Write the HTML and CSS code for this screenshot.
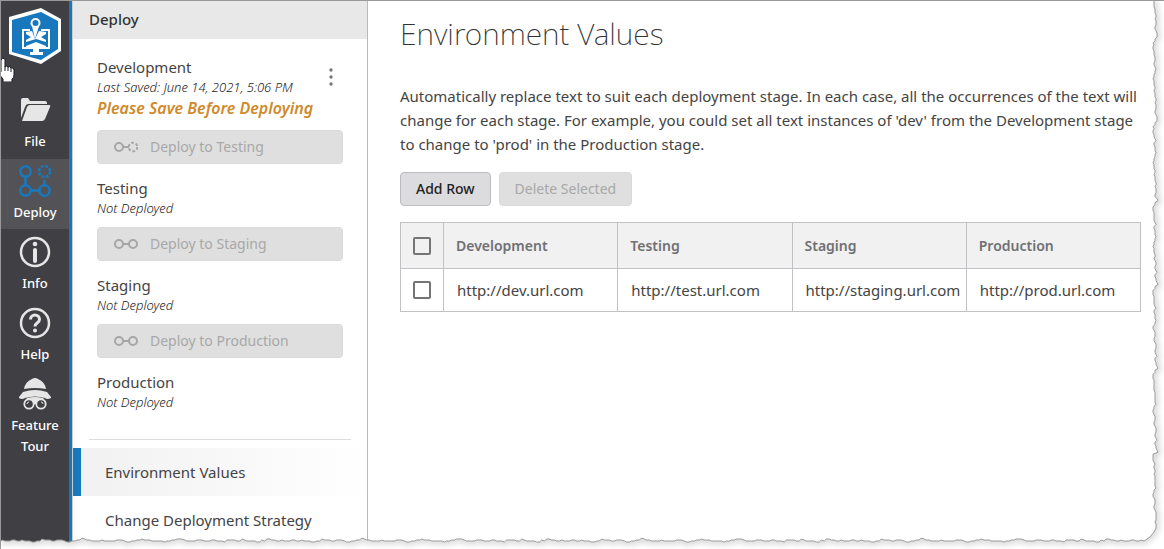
FILE: index.html
```html
<!DOCTYPE html>
<html lang="en">
<head>
<meta charset="utf-8">
<title>Environment Values</title>
<link rel="stylesheet" href="styles.css">
</head>
<body>
<div class="app">
  <nav class="rail">
    <a class="logo" href="#" aria-label="Home">
      <svg width="54" height="58" viewBox="0 0 54 58">
        <path d="M33 0 53 11V43L33 56 1 46V9Z" fill="#fff"/>
        <path d="M33 4 50 13V41L33 52 4 44V12Z" fill="#1878be"/>
        <path d="M22 22H15V40H41V22H33" fill="none" stroke="#fff" stroke-width="2"/>
        <path d="M18 24l6-1 3 8 4-8 7 1v2l-5 3 5 3v2l-10-3-10 3v-2l5-3-5-3Z" fill="#fff"/>
        <path d="M18 38l10-4 10 4v1H18ZM25 41h6v3h4v3H22v-3h3Z" fill="#fff"/>
        <path d="M27 31 24 18h7Z" fill="#fff"/>
        <circle cx="27.500" cy="15" r="4" fill="#1878be" stroke="#fff" stroke-width="2"/>
      </svg>
    </a>
    <a class="rail-item" href="#">
      <svg width="32" height="32" viewBox="0 0 32 32" fill="#e6e6e6">
        <path d="M2 24V6q0-2 2-2h5l2 3h15q2 0 2 2v1H9q-2 0-3 3Z"/>
        <path d="M3 27 8 13q1-2 3-2h19q2 0 1 2l-5 12q-1 2-3 2Z"/>
      </svg>
      <span>File</span>
    </a>
    <a class="rail-item active" href="#" aria-current="page">
      <svg width="32" height="32" viewBox="0 0 32 32" fill="none" stroke="#1878be" stroke-width="2.500">
        <circle cx="6.500" cy="6.500" r="5.200"/><circle cx="6.500" cy="25.500" r="5.200"/><circle cx="25.500" cy="25.500" r="5.200"/>
        <circle cx="25.500" cy="6.500" r="5.500" stroke-dasharray="2.900 1.420"/>
        <path d="M6.500 12v8M12 25.500h8M25.500 15v5"/>
      </svg>
      <span>Deploy</span>
    </a>
    <a class="rail-item" href="#">
      <svg width="32" height="32" viewBox="0 0 32 32" fill="none" stroke="#e6e6e6">
        <circle cx="16" cy="16" r="14" stroke-width="2.500"/>
        <path d="M16 14v11" stroke-width="4" stroke-linecap="round"/>
        <circle cx="16" cy="8" r="2.300" fill="#e6e6e6" stroke="none"/>
      </svg>
      <span>Info</span>
    </a>
    <a class="rail-item" href="#">
      <svg width="32" height="32" viewBox="0 0 32 32" fill="none" stroke="#e6e6e6">
        <circle cx="16" cy="16" r="14" stroke-width="2.500"/>
        <path d="M11.500 12.500c0-6 9-6 9 0 0 3.500-4.500 3-4.500 7" stroke-width="3"/>
        <circle cx="16" cy="23.500" r="2" fill="#e6e6e6" stroke="none"/>
      </svg>
      <span>Help</span>
    </a>
    <a class="rail-item" href="#">
      <svg width="32" height="32" viewBox="0 0 32 32">
        <path d="M5 11Q6 4 13 1q3-2 6 0 7 3 8 10-11-2-22 0Z" fill="#e6e6e6"/>
        <path d="M4 14q12-4 24 0l4 5v1q-4 2-6 0-10-3-20 0-3 2-6 0v-1Z" fill="#e6e6e6"/>
        <path d="M8 20q8-2 16 0l3 4H5Z" fill="#e6e6e6"/>
        <g fill="#404044" stroke="#e6e6e6" stroke-width="1.800"><circle cx="10" cy="26" r="4.700"/><circle cx="22" cy="26" r="4.700"/></g>
        <circle cx="16" cy="24.500" r="1.800" fill="#e6e6e6"/>
        <path d="M8 26q0-2 2-2M24 26q0-2-2-2" fill="none" stroke="#e6e6e6"/>
      </svg>
      <span>Feature Tour</span>
    </a>
    <svg class="pointer" width="16" height="26" viewBox="0 0 16 26" aria-hidden="true">
      <path d="M1 4q1-3 4-1v8q2-2 3 0 2-1 3 1 3-1 3 2v5q0 3-2 4v3H3v-3L-2 17q0-3 3-1Z" fill="#fff" stroke="#1a1a28"/>
      <path d="M5 10v5M8 11v4M11 12v4" stroke="#1a1a28"/>
    </svg>
  </nav>

  <aside class="panel">
    <h2 class="panel-title">Deploy</h2>
    <div class="stages">
      <section class="stage">
        <h3>Development</h3>
        <p>Last Saved: June 14, 2021, 5:06 PM</p>
        <p class="warning">Please Save Before Deploying</p>
        <button class="menu" type="button" aria-label="Development options">
          <svg width="6" height="18" viewBox="0 0 6 18" fill="#777"><circle cx="3" cy="2" r="1.700"/><circle cx="3" cy="9" r="1.700"/><circle cx="3" cy="16" r="1.700"/></svg>
        </button>
        <button class="btn deploy" type="button" disabled>
          <svg width="24" height="12" viewBox="0 0 24 12" fill="none" stroke="#a6a6a6" stroke-width="2"><circle cx="5" cy="6" r="4"/><path d="M9 6h6"/><circle cx="19" cy="6" r="4.300" stroke-dasharray="2.700 1.800"/></svg>
          Deploy to Testing
        </button>
      </section>
      <section class="stage">
        <h3>Testing</h3>
        <p>Not Deployed</p>
        <button class="btn deploy" type="button" disabled>
          <svg width="24" height="12" viewBox="0 0 24 12" fill="none" stroke="#a6a6a6" stroke-width="2"><circle cx="5" cy="6" r="4"/><path d="M9 6h6"/><circle cx="19" cy="6" r="4"/></svg>
          Deploy to Staging
        </button>
      </section>
      <section class="stage">
        <h3>Staging</h3>
        <p>Not Deployed</p>
        <button class="btn deploy" type="button" disabled>
          <svg width="24" height="12" viewBox="0 0 24 12" fill="none" stroke="#a6a6a6" stroke-width="2"><circle cx="5" cy="6" r="4"/><path d="M9 6h6"/><circle cx="19" cy="6" r="4"/></svg>
          Deploy to Production
        </button>
      </section>
      <section class="stage">
        <h3>Production</h3>
        <p>Not Deployed</p>
      </section>
    </div>
    <nav class="links">
      <a class="current" href="#">Environment Values</a>
      <a href="#">Change Deployment Strategy</a>
    </nav>
  </aside>

  <main class="content">
    <h1>Environment Values</h1>
    <p class="intro">Automatically replace text to suit each deployment stage. In each case, all the occurrences of the text will change for each stage. For example, you could set all text instances of 'dev' from the Development stage to change to 'prod' in the Production stage.</p>
    <div class="actions">
      <button class="btn primary" type="button">Add Row</button>
      <button class="btn" type="button" disabled>Delete Selected</button>
    </div>
    <table>
      <colgroup><col class="col-check"><col><col><col><col></colgroup>
      <thead>
        <tr>
          <th><input type="checkbox" aria-label="Select all rows"></th>
          <th scope="col">Development</th><th scope="col">Testing</th><th scope="col">Staging</th><th scope="col">Production</th>
        </tr>
      </thead>
      <tbody>
        <tr>
          <td class="check"><input type="checkbox" aria-label="Select row"></td>
          <td>http://dev.url.com</td><td>http://test.url.com</td><td>http://staging.url.com</td><td>http://prod.url.com</td>
        </tr>
      </tbody>
    </table>
  </main>

  <svg class="torn" viewBox="0 0 1164 549" preserveAspectRatio="none" aria-hidden="true"></svg>
</div>
<script src="torn.js"></script>
</body>
</html>
```

FILE: styles.css
```css
* { box-sizing: border-box; }
body {
  margin: 0;
  background: #fff;
  color: #444;
  font: 400 15px/24px "Noto Sans", "Open Sans", sans-serif;
}
h1, h2, h3, p { margin: 0; }
a { color: inherit; text-decoration: none; }
.app {
  position: relative;
  display: flex;
  height: 100vh;
  overflow: hidden;
  border-top: 1px solid #999;
  border-left: 1px solid #999;
}
.rail {
  position: relative;
  flex: 0 0 71px;
  border-right: 3px solid #1878be;
  background: #404044;
  color: #fff;
}
.logo { display: flex; justify-content: center; padding: 7px 0 22px; }
.logo svg { display: block; }
.rail-item {
  display: flex;
  flex-direction: column;
  align-items: center;
  gap: 5px;
  padding: 6px 4px;
  margin-bottom: 1px;
  font-size: 13px;
  font-weight: 500;
  line-height: 21px;
  text-align: center;
}
.rail-item.active { background: #535357; }
.pointer { position: absolute; left: -1px; top: 55px; }
.panel {
  flex: 0 0 296px;
  border-left: 1px solid #ccc;
  border-right: 1px solid #bbb;
}
.panel-title {
  padding: 7px 16px 8px;
  background: #e8e8e8;
  color: #333;
  font-size: 15px;
  font-weight: 500;
  line-height: 23px;
}
.stages {
  display: flex;
  flex-direction: column;
  gap: 14px;
  margin: 0 16px;
  padding: 18px 8px 27px;
  border-bottom: 1px solid #ddd;
}
.stage { position: relative; }
.stage h3 { font-size: 15px; font-weight: 400; line-height: 20px; }
.stage p { color: #222; font-size: 13px; font-style: italic; font-weight: 300; line-height: 20px; }
.stage .warning { padding-bottom: 2px; color: #d08a2a; font-size: 16px; font-weight: 600; line-height: 22px; }
.menu {
  position: absolute;
  top: 9px;
  right: 4px;
  display: flex;
  justify-content: center;
  width: 16px;
  padding: 2px 0;
  border: 0;
  background: none;
}
.btn {
  height: 34px;
  padding: 0 15px;
  border: 1px solid #dadada;
  border-radius: 4px;
  background: #dfdfdf;
  color: #a8a8a8;
  font: 400 14px/20px "Noto Sans", "Open Sans", sans-serif;
}
.btn.primary { border-color: #bcbcc0; background: #dcdcde; color: #222; font-weight: 500; }
.deploy {
  display: flex;
  align-items: center;
  gap: 12px;
  width: 100%;
  margin-top: 9px;
  padding: 0 16px;
}
.links { padding-top: 8px; }
.links a { display: block; padding: 12px 24px; border-left: 8px solid transparent; }
.links .current {
  border-color: #1878be;
  background: linear-gradient(90deg, #f1f1f1, #fff);
}
.content { flex: 1; min-width: 0; padding: 11px 23px 0 32px; }
h1 { color: #333; font-size: 30px; font-weight: 200; line-height: 44px; }
.intro { margin-top: 28px; padding-right: 2px; }
.actions { display: flex; gap: 8px; margin: 16px 0; }
table { width: 100%; border-collapse: collapse; table-layout: fixed; }
.col-check { width: 43px; }
th, td { border: 1px solid #c2c2c6; padding: 0 12px; text-align: left; white-space: nowrap; }
th { height: 46px; background: #f1f1f1; color: #707074; font-size: 14px; font-weight: 600; }
td { height: 43px; padding-left: 13px; padding-right: 0; }
td.check { padding-left: 12px; }
input[type="checkbox"] {
  display: block;
  width: 18px;
  height: 18px;
  margin: 0;
  border: 2px solid #757575;
  border-radius: 2px;
  background: transparent;
  appearance: none;
}
.torn {
  position: absolute;
  inset: 0;
  width: 100%;
  height: 100%;
  pointer-events: none;
}
.torn .paper { fill: #fff; }
.torn .edge { fill: none; stroke: #999; }
.torn .shadow { fill: none; stroke: #999; stroke-width: 5; opacity: .5; filter: blur(3px); }
```

FILE: torn.js
```js
// Draws the ragged right and bottom edges of the page.
const svg = document.querySelector(".torn");
const right = [1154, 1155, 1156, 1155, 1156, 1155, 1156, 1157, 1155, 1153, 1153, 1154, 1154, 1155, 1154, 1155, 1155, 1155, 1154, 1153, 1154, 1155];
const bottom = [541, 541, 540, 541, 541, 541, 540, 539, 540, 541, 542, 541, 541, 540, 541, 540, 540, 541, 542, 541, 540];
let line = "M1154 0";
for (let y = 6, i = 0; y < 530; y += 4, i++) {
  line += `L${right[(i + (i >> 4)) % right.length]} ${y}l${i % 3 === 0 ? 1 : 0} 2`;
}
line += "L1154 532L1150 537";
for (let x = 1144, i = 0; x > 0; x -= 5, i++) {
  line += `L${x} ${bottom[(i + (i >> 3)) % bottom.length]}l-3 ${i % 4 === 0 ? -1 : 0}`;
}
line += "L0 541";
svg.innerHTML =
  `<path class="paper" d="${line}V549H1164V0Z"/>` +
  `<clipPath id="outside"><path d="${line}V549H1164V0Z"/></clipPath>` +
  `<g clip-path="url(#outside)"><path class="shadow" d="${line}"/></g>` +
  `<path class="edge" d="${line}"/>`;
```
